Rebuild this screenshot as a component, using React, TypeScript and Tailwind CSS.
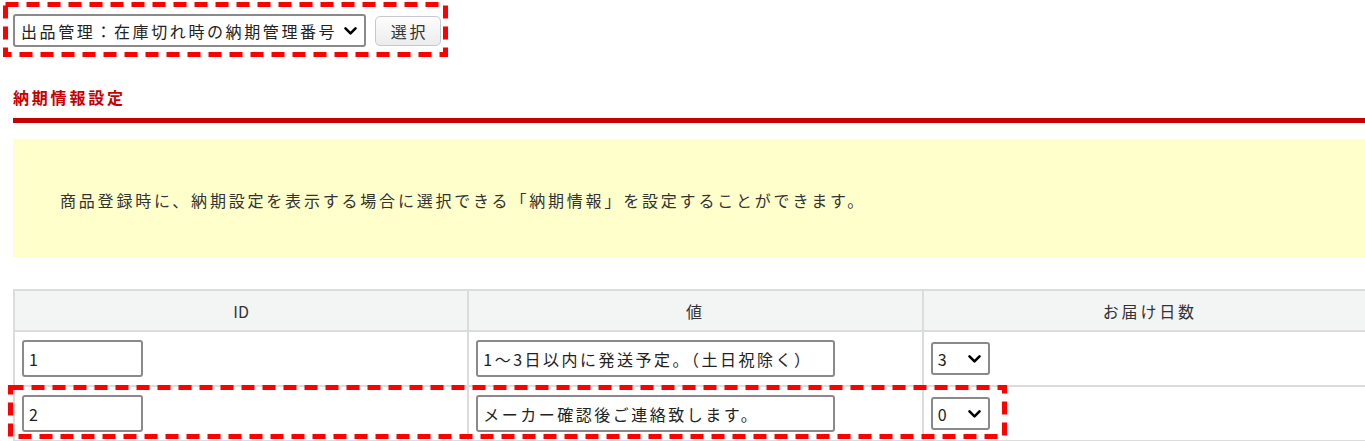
import React from "react";

const font = { fontFamily: '"Noto Sans CJK JP", "Noto Sans", sans-serif' };

function Chevron() {
  return (
    <svg width="13" height="9" viewBox="0 0 13 9" className="pointer-events-none absolute right-[7px] top-1/2 -translate-y-1/2">
      <path d="M1.5 1.8 L6.5 6.8 L11.5 1.8" fill="none" stroke="#000" strokeWidth="2.6" strokeLinecap="round" strokeLinejoin="round" />
    </svg>
  );
}

function Dashed({ className }: { className: string }) {
  return (
    <svg className={`pointer-events-none absolute ${className}`} width="100%" height="100%" preserveAspectRatio="none">
      <rect x="2.5" y="2.5" width="calc(100% - 5px)" height="calc(100% - 5px)" fill="none" stroke="#ff0000" strokeWidth="5" strokeDasharray="13 8" />
    </svg>
  );
}

function DaysSelect({ value }: { value: string }) {
  return (
    <div className="relative w-[59px] h-[33px] rounded-[3px] border-2 border-[#8a8a8a] bg-white flex items-center pl-[5px] text-[#222] tracking-normal">
      {value}
      <Chevron />
    </div>
  );
}

const rows = [
  { id: "1", value: "1～3日以内に発送予定。（土日祝除く）", days: "3" },
  { id: "2", value: "メーカー確認後ご連絡致します。", days: "0" },
];

export default function App() {
  return (
    <div className="relative w-[1365px] h-[441px] overflow-hidden bg-white pl-[13px] text-[16px] tracking-[2.8px]" style={font}>
      {/* category select */}
      <div className="flex items-center gap-[9px] pt-[14px]">
        <div className="relative w-[353px] h-[33px] rounded-[3px] border-2 border-[#8a8a8a] bg-white flex items-center pl-[6px] text-[#222] whitespace-nowrap tracking-[2.6px]">
          出品管理：在庫切れ時の納期管理番号
          <Chevron />
        </div>
        <button className="w-[66px] h-[30px] rounded-[5px] border border-[#c8c8d0] bg-gradient-to-b from-[#fdfdfd] to-[#ececec] text-[#333] pl-[3px]">
          選択
        </button>
      </div>

      {/* section heading */}
      <div className="mt-[39px] border-b-[5px] border-[#c80000] pb-[10px]">
        <h2 className="text-[16px] leading-[22px] font-bold text-[#c80000] tracking-[2.8px]">納期情報設定</h2>
      </div>

      <div className="mt-[16px] h-[118px] bg-[#ffffcc] flex items-center pl-[47px] pt-[4px] text-[#333]">
        商品登録時に、納期設定を表示する場合に選択できる「納期情報」を設定することができます。
      </div>

      {/* table */}
      <table className="mt-[32px] w-[1365px] border-collapse text-[#333]">
        <thead>
          <tr className="h-[41px] bg-[#f3f4f4]">
            <th className="w-[453px] border-2 border-[#dcdcdc] font-normal tracking-normal">ID</th>
            <th className="w-[453px] border-2 border-[#dcdcdc] font-normal">値</th>
            <th className="w-[453px] border-2 border-[#dcdcdc] font-normal">お届け日数</th>
          </tr>
        </thead>
        <tbody>
          {rows.map((r) => (
            <tr key={r.id} className="h-[55px]">
              <td className="border-2 border-[#dcdcdc] pl-[7px]">
                <div className="w-[121px] h-[37px] rounded-[3px] border-2 border-[#8a8a8a] flex items-center pl-[5px] text-[#222] tracking-normal">{r.id}</div>
              </td>
              <td className="border-2 border-[#dcdcdc] pl-[7px]">
                <div className="w-[359px] h-[37px] rounded-[3px] border-2 border-[#8a8a8a] flex items-center pl-[5px] text-[#222] whitespace-nowrap overflow-hidden tracking-[2.5px]">{r.value}</div>
              </td>
              <td className="border-2 border-[#dcdcdc] pl-[7px]">
                <DaysSelect value={r.days} />
              </td>
            </tr>
          ))}
        </tbody>
      </table>

      {/* annotation boxes */}
      <div className="absolute left-[3px] top-[2px] w-[445px] h-[55px]">
        <Dashed className="inset-0" />
      </div>
      <div className="absolute left-[8px] top-[385px] w-[999px] h-[54px]">
        <Dashed className="inset-0" />
      </div>
    </div>
  );
}
